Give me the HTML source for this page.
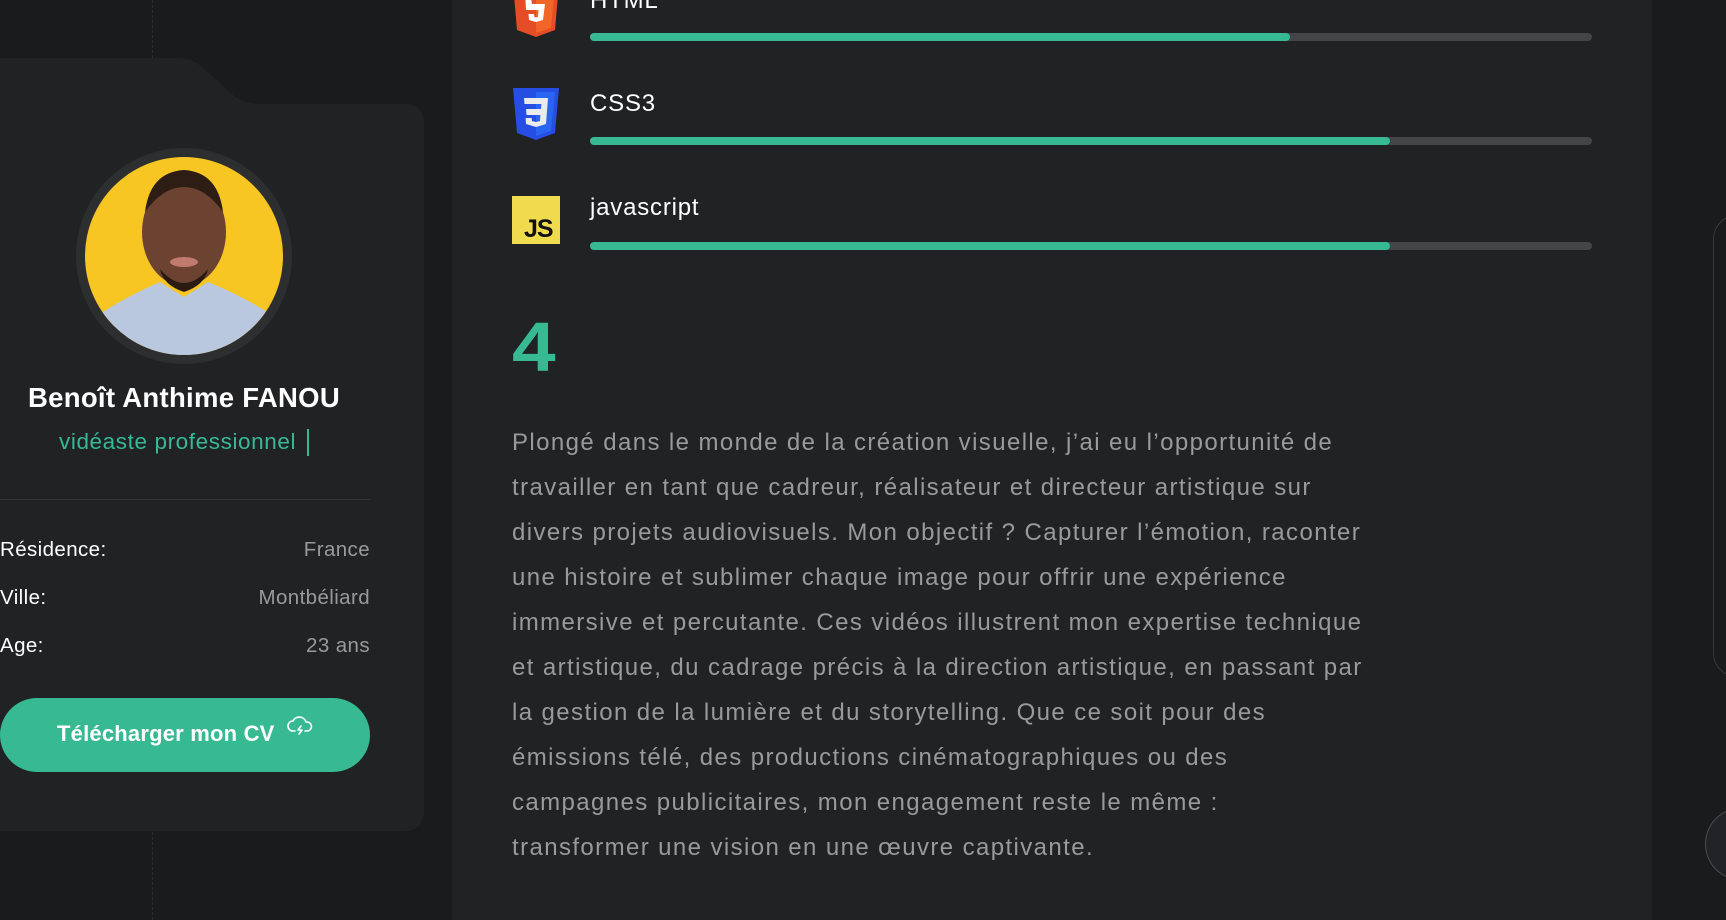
<!DOCTYPE html>
<html><head><meta charset="utf-8"><style>
*{margin:0;padding:0;box-sizing:border-box}
body{width:1726px;height:920px;overflow:hidden;background:#1a1b1d;font-family:"Liberation Sans",sans-serif;position:relative}
.abs{position:absolute}
.dash{left:152px;width:0;border-left:1px dashed #2c2d30}
.panel{left:452px;top:0;width:1200px;height:920px;background:#212224}
.bar{left:590px;width:1002px;height:8px;border-radius:4px;background:#444547}
.bar i{display:block;height:8px;border-radius:4px;background:#37b992}
.lbl{left:590px;color:#fff;font-size:24px;letter-spacing:0.8px}
.row{left:0;width:370px;font-size:20.5px;letter-spacing:0.4px;color:#fff;display:flex;justify-content:space-between}
.row span:last-child{color:#9a9a9a}
p.txt{left:512px;top:420px;color:#9a9a9a;font-size:24px;letter-spacing:1.4px;line-height:45px;white-space:nowrap}
</style></head><body>
<div class="abs dash" style="top:0;height:58px"></div>
<div class="abs dash" style="top:832px;height:88px"></div>
<svg class="abs" style="left:0;top:0" width="452" height="920">
<path d="M0 58 H178 Q192 58 202 67 L232 94 Q243 104 258 104 H404 Q424 104 424 124 V811 Q424 831 404 831 H0 Z" fill="#212224"/>
</svg>
<div class="abs panel"></div>
<!-- avatar -->
<div class="abs" style="left:76px;top:148px;width:216px;height:216px;border-radius:50%;background:#2d2e30"></div>
<svg class="abs" style="left:85px;top:157px" width="198" height="198" viewBox="0 0 198 198">
<defs><clipPath id="c"><circle cx="99" cy="99" r="99"/></clipPath></defs>
<g clip-path="url(#c)">
<rect width="198" height="198" fill="#f7c623"/>
<path d="M10 160 Q40 140 75 125 L99 140 L123 125 Q160 140 190 160 L198 198 H0Z" fill="#b9c8de"/>
<ellipse cx="99" cy="75" rx="42" ry="54" fill="#6b4330"/>
<path d="M60 55 Q65 15 99 13 Q133 15 138 55 Q120 30 99 30 Q78 30 60 55Z" fill="#2e1d15"/>
<path d="M75 112 Q99 140 123 112 Q120 128 99 135 Q78 128 75 112Z" fill="#2a1a12"/>
<ellipse cx="99" cy="105" rx="14" ry="5" fill="#c07a6e"/>
</g></svg>
<div class="abs" style="left:0;top:382px;width:368px;text-align:center;color:#fff;font-weight:bold;font-size:27.5px;letter-spacing:0.3px">Benoît Anthime FANOU</div>
<div class="abs" style="left:59px;top:429px;color:#37b992;font-size:22.5px;letter-spacing:0.6px">vidéaste professionnel</div>
<div class="abs" style="left:307px;top:429px;width:2px;height:27px;background:#37b992"></div>
<div class="abs" style="left:0;top:499px;width:370px;height:1px;background:#333436"></div>
<div class="abs row" style="top:538px"><span>Résidence:</span><span>France</span></div>
<div class="abs row" style="top:586px"><span>Ville:</span><span>Montbéliard</span></div>
<div class="abs row" style="top:634px"><span>Age:</span><span>23 ans</span></div>
<div class="abs" style="left:0;top:698px;width:370px;height:74px;border-radius:37px;background:#37b992"></div>
<div class="abs" style="left:57px;top:721px;color:#fff;font-weight:bold;font-size:22px;letter-spacing:0.2px">Télécharger mon CV</div>
<svg class="abs" style="left:287px;top:714px" width="26" height="24" viewBox="0 0 26 24" fill="none" stroke="#fff" stroke-width="1.6" stroke-linecap="round" stroke-linejoin="round"><path d="M8 17H6a5 5 0 0 1 0-10 7 7 0 0 1 13 1h1a4.5 4.5 0 0 1 0 9h-2"/><path d="M14 12l-3 4h4l-3 4"/></svg>

<!-- skills -->
<svg class="abs" style="left:513px;top:-16px" width="46" height="53" viewBox="0 0 46 53"><path d="M0 0H46L42 46L23 53L4 46Z" fill="#e44d26"/><path d="M23 4V49L38 44L42 4Z" fill="#f16529"/><path d="M12 8H34L33 14H18L19 20H32L30 36L23 38L16 36L15.5 30H21L21.5 33L23 33.5L25 33L25.5 26H13Z" fill="#fff"/></svg>
<div class="abs lbl" style="top:-13px">HTML</div>
<div class="abs bar" style="top:33px"><i style="width:700px"></i></div>

<svg class="abs" style="left:513px;top:88px" width="46" height="52" viewBox="0 0 46 52"><path d="M0 0H46L42 45L23 52L4 45Z" fill="#264de4"/><path d="M23 4V48L38 43L42 4Z" fill="#2965f1"/><path d="M11 10H35L33 36L23 39L13 36L12.6 30H18.6L19 33L23 34L27 33L27.4 27H13.5L13 21H28L28.4 16H11.5Z" fill="#ebebeb"/></svg>
<div class="abs lbl" style="top:90px">CSS3</div>
<div class="abs bar" style="top:137px"><i style="width:800px"></i></div>

<div class="abs" style="left:512px;top:196px;width:48px;height:48px;background:#f0db4f"></div>
<div class="abs" style="left:524px;top:215px;font-weight:bold;font-size:25px;color:#111;letter-spacing:-1px">JS</div>
<div class="abs lbl" style="top:194px">javascript</div>
<div class="abs bar" style="top:242px"><i style="width:800px"></i></div>

<div class="abs" style="left:512px;top:310px;color:#37b992;font-weight:bold;font-size:70px;line-height:74px;transform:scaleX(1.12);transform-origin:left">4</div>
<p class="abs txt">Plongé dans le monde de la création visuelle, j’ai eu l’opportunité de<br>travailler en tant que cadreur, réalisateur et directeur artistique sur<br>divers projets audiovisuels. Mon objectif ? Capturer l’émotion, raconter<br>une histoire et sublimer chaque image pour offrir une expérience<br>immersive et percutante. Ces vidéos illustrent mon expertise technique<br>et artistique, du cadrage précis à la direction artistique, en passant par<br>la gestion de la lumière et du storytelling. Que ce soit pour des<br>émissions télé, des productions cinématographiques ou des<br>campagnes publicitaires, mon engagement reste le même :<br>transformer une vision en une œuvre captivante.</p>

<div class="abs" style="left:1713px;top:215px;width:60px;height:462px;border:1px solid #37383b;border-radius:24px"></div>
<div class="abs" style="left:1705px;top:808px;width:70px;height:72px;border-radius:50%;background:#222326;border:1px solid #4a4d55"></div>
</body></html>
